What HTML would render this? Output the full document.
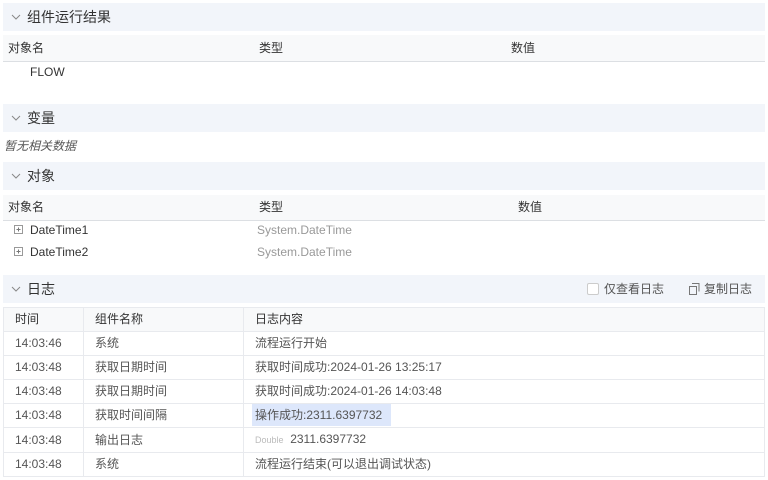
<!DOCTYPE html>
<html><head><style>
body{margin:0;width:768px;height:480px;background:#fff;font-family:"Liberation Sans","Noto Sans CJK SC",sans-serif;font-size:12px;color:#333;position:relative;overflow:hidden}
.a{position:absolute}
.hd{position:absolute;left:3px;width:762px;height:28px;background:#f2f5fa;font-size:14px;line-height:28px;color:#333}
.hd span.t{position:absolute;left:24px}
.hd svg{position:absolute;left:8px;top:11px}
.th{position:absolute;left:3px;width:762px;height:26px;background:#f8f9fa;border-bottom:1px solid #dcdfe3;line-height:26px}
.th span{position:absolute}
table{position:absolute;left:3px;top:307px;width:762px;border-collapse:collapse;font-size:12px}
td{border:1px solid #e8eaee;height:23px;padding:0 0 0 11px;line-height:23px;color:#555;white-space:nowrap;overflow:hidden}
tr.h td{background:#f8f9fa;color:#333}
</style></head><body>
<div class="hd" style="top:3px"><svg width="10" height="7"><path d="M1 1L5 5L9 1" stroke="#888" fill="none"/></svg><span class="t">组件运行结果</span></div>
<div class="th" style="top:35px"><span style="left:5px">对象名</span><span style="left:256px">类型</span><span style="left:508px">数值</span></div>
<div class="a" style="left:30px;top:64px;line-height:16px">FLOW</div>
<div class="hd" style="top:104px"><svg width="10" height="7"><path d="M1 1L5 5L9 1" stroke="#888" fill="none"/></svg><span class="t">变量</span></div>
<div class="a" style="left:4px;top:137px;font-style:italic;color:#555">暂无相关数据</div>
<div class="hd" style="top:162px"><svg width="10" height="7"><path d="M1 1L5 5L9 1" stroke="#888" fill="none"/></svg><span class="t">对象</span></div>
<div class="th" style="top:195px;height:25px;line-height:25px"><span style="left:5px">对象名</span><span style="left:256px">类型</span><span style="left:515px">数值</span></div>
<svg class="a" style="left:14px;top:225px" width="10" height="10"><rect x=".5" y=".5" width="8" height="8" fill="none" stroke="#999"/><path d="M2.5 4.5h4M4.5 2.5v4" stroke="#777"/></svg>
<div class="a" style="left:30px;top:222px;line-height:16px">DateTime1</div>
<div class="a" style="left:257px;top:222px;line-height:16px;color:#999">System.DateTime</div>
<svg class="a" style="left:14px;top:247px" width="10" height="10"><rect x=".5" y=".5" width="8" height="8" fill="none" stroke="#999"/><path d="M2.5 4.5h4M4.5 2.5v4" stroke="#777"/></svg>
<div class="a" style="left:30px;top:244px;line-height:16px">DateTime2</div>
<div class="a" style="left:257px;top:244px;line-height:16px;color:#999">System.DateTime</div>
<div class="hd" style="top:275px"><svg width="10" height="7"><path d="M1 1L5 5L9 1" stroke="#888" fill="none"/></svg><span class="t">日志</span>
<span class="a" style="left:584px;top:8px;width:10px;height:10px;border:1px solid #ccc;border-radius:2px;background:#fff"></span>
<span class="a" style="left:601px;color:#555;font-size:12px">仅查看日志</span>
<svg class="a" style="left:686px;top:8px" width="11" height="12"><path d="M3 .5h7v8M.5 3.5h7v8h-7z" fill="none" stroke="#777"/></svg>
<span class="a" style="left:701px;color:#555;font-size:12px">复制日志</span></div>
<table>
<tr class="h"><td style="width:68px">时间</td><td style="width:148px">组件名称</td><td>日志内容</td></tr>
<tr><td>14:03:46</td><td>系统</td><td>流程运行开始</td></tr>
<tr><td>14:03:48</td><td>获取日期时间</td><td>获取时间成功:2024-01-26 13:25:17</td></tr>
<tr><td>14:03:48</td><td>获取日期时间</td><td>获取时间成功:2024-01-26 14:03:48</td></tr>
<tr><td>14:03:48</td><td>获取时间间隔</td><td style="padding-left:8px"><span style="background:#dde7fb;display:inline-block;vertical-align:top;height:22px;line-height:22px;padding:0 9px 0 3px">操作成功:2311.6397732</span></td></tr>
<tr><td>14:03:48</td><td>输出日志</td><td><span style="font-size:9px;color:#bbb">Double</span>&nbsp; 2311.6397732</td></tr>
<tr><td>14:03:48</td><td>系统</td><td>流程运行结束(可以退出调试状态)</td></tr>
</table>
</body></html>
